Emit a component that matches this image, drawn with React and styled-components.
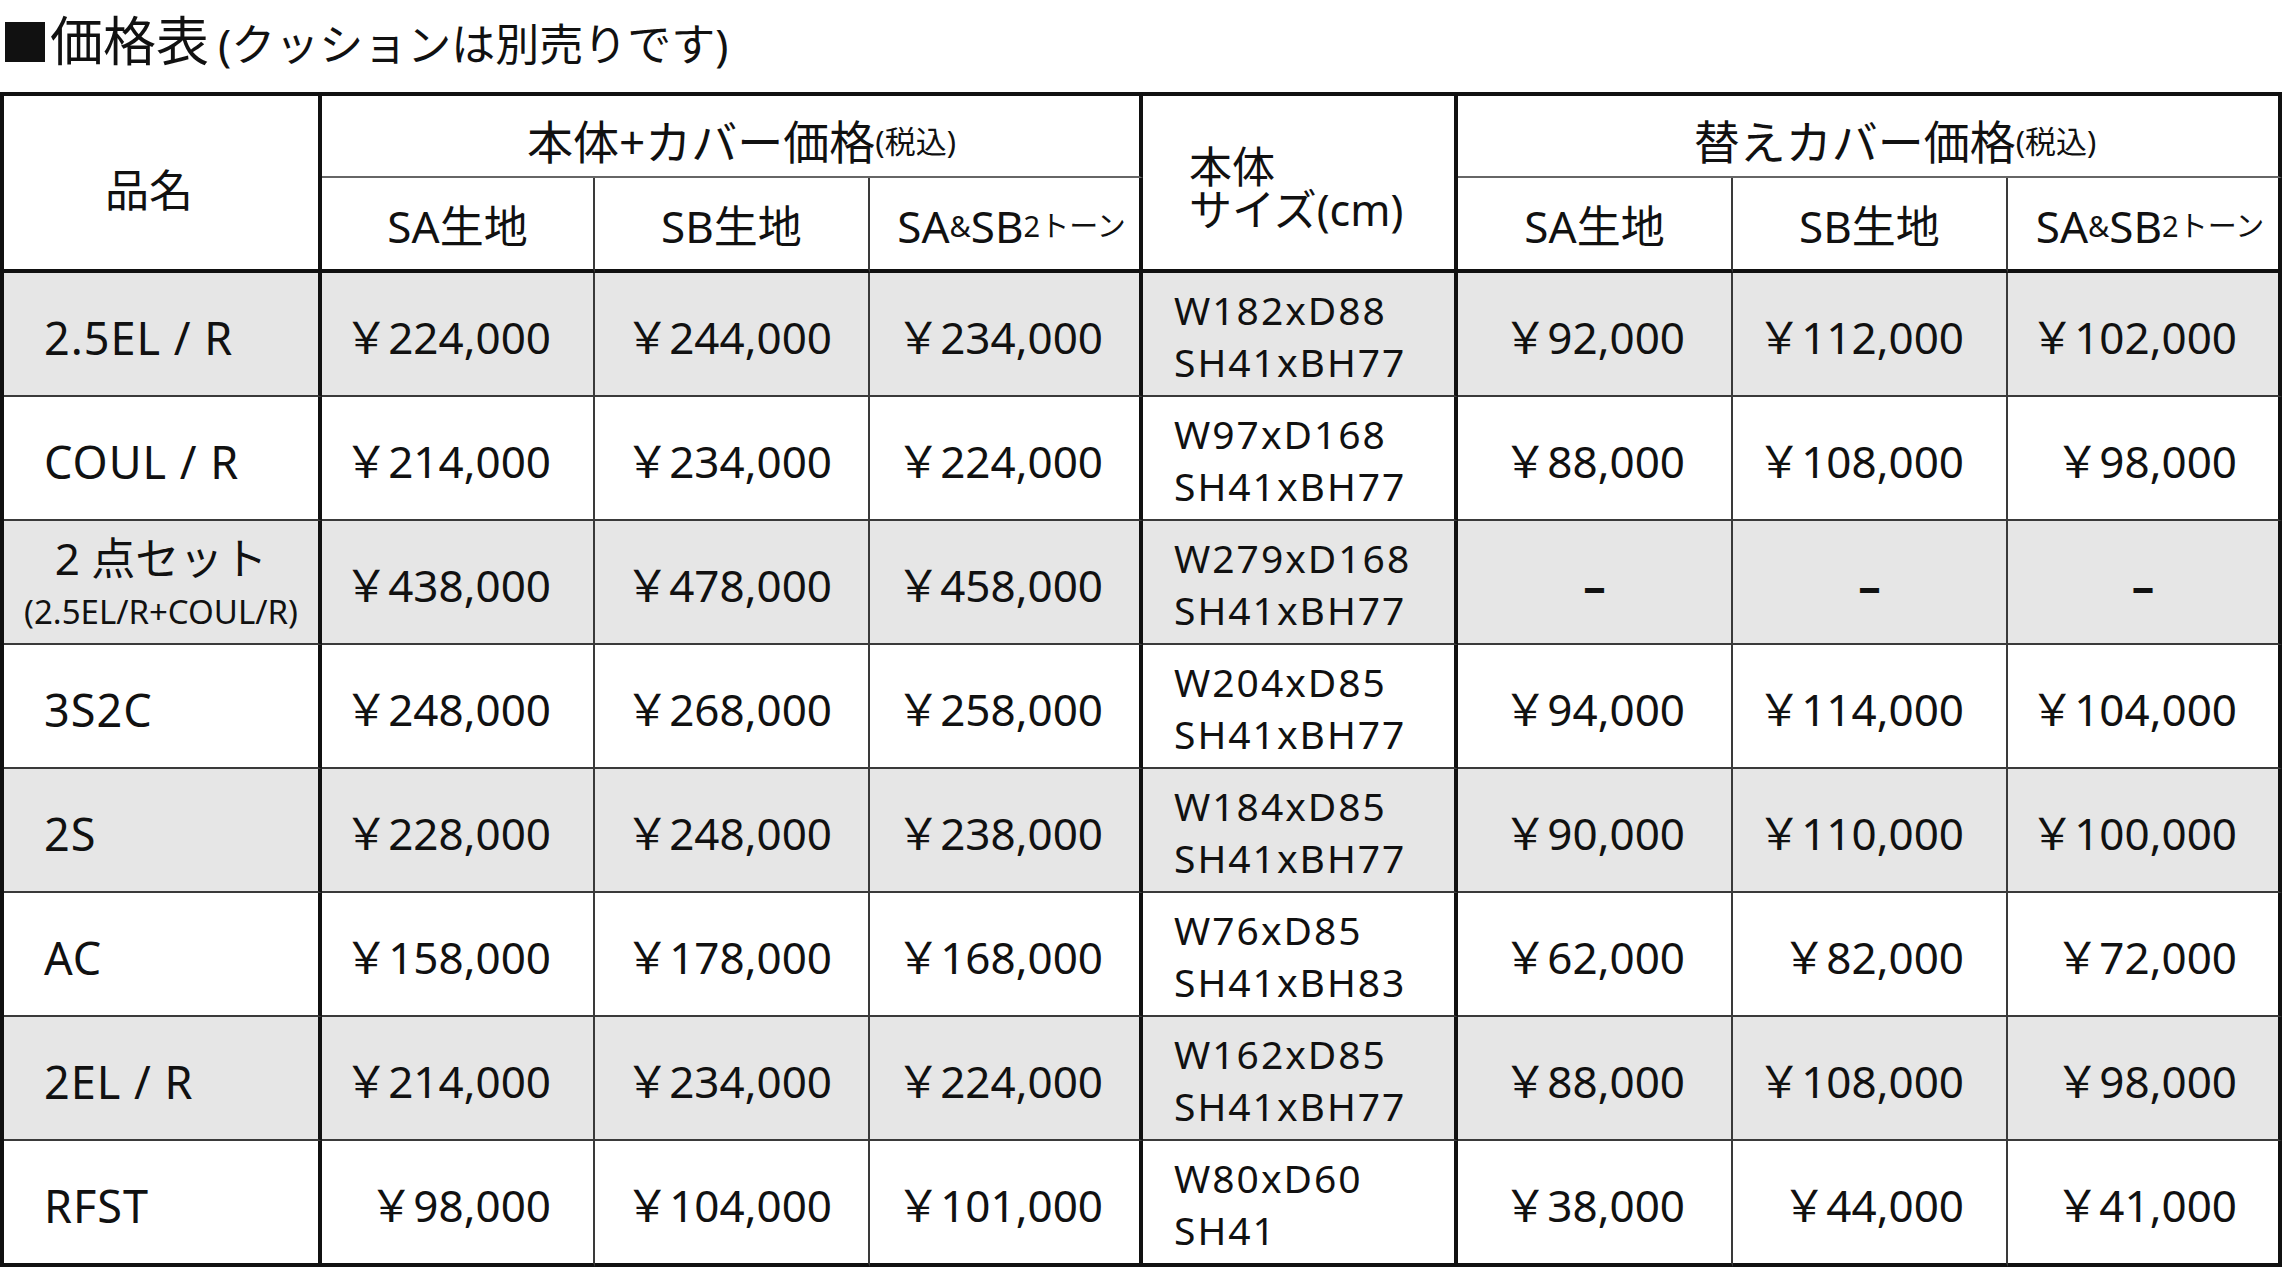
import React from "react";
import styled, { createGlobalStyle } from "styled-components";

const GlobalStyle = createGlobalStyle`
  html, body {
    margin: 0;
    padding: 0;
    background: #fff;
  }
  body {
    font-family: "Noto Sans", "Noto Sans CJK JP", sans-serif;
    color: #111;
  }
`;

const lineColor = { thick: "#111", thin: "#3a3a3a", sub: "#666" };
const lineWidth = { thick: 4, thin: 2, sub: 2 };

const Page = styled.div`
  width: 2284px;
`;

const Title = styled.h1`
  display: flex;
  align-items: baseline;
  box-sizing: border-box;
  height: 92px;
  margin: 0;
  padding-top: 14px;
  font-weight: 400;
  line-height: 1;
`;

const Square = styled.span`
  font-size: 50px;
`;

const TitleMain = styled.span`
  font-size: 53px;
`;

const TitleNote = styled.span`
  font-size: 44px;
  margin-left: 9px;
`;

const Table = styled.div`
  display: grid;
  grid-template-columns: 318px 273px 275px 273px 315px 275px 275px 274px;
  grid-template-rows: 82px 95px repeat(7, 124px) 126px;
  box-sizing: border-box;
  width: 2282px;
  border-top: 4px solid ${lineColor.thick};
  border-left: 4px solid ${lineColor.thick};
`;

const Cell = styled.div`
  box-sizing: border-box;
  display: flex;
  align-items: center;
  min-width: 0;
  border-right: ${(p) => lineWidth[p.$right]}px solid ${(p) => lineColor[p.$right]};
  border-bottom: ${(p) => lineWidth[p.$bottom]}px solid ${(p) => lineColor[p.$bottom]};
  background: ${(p) => (p.$gray ? "#e6e6e6" : "#fff")};
  white-space: nowrap;
`;

const HeadCell = styled(Cell)`
  justify-content: center;
  font-size: 44px;
  line-height: 1;
`;

const FabricHead = styled(HeadCell)`
  grid-row: 2;
  grid-column: ${(p) => p.$col};
  padding: 4px 0 0 ${(p) => p.$shift || 0}px;
`;

const NameHead = styled(HeadCell)`
  grid-row: 1 / span 2;
  grid-column: 1;
  padding: 14px 24px 0 0;
`;

const GroupHead = styled(HeadCell)`
  grid-row: 1;
  grid-column: ${(p) => p.$col} / span 3;
  padding: 10px 0 0 ${(p) => p.$shift}px;
  font-size: 46px;
`;

const Tax = styled.span`
  font-size: 31px;
`;

const SizeHead = styled(Cell)`
  grid-row: 1 / span 2;
  grid-column: 5;
  flex-direction: column;
  align-items: flex-start;
  justify-content: center;
  padding: 10px 0 0 46px;
  font-size: 43px;
  line-height: 43px;
`;

const Small = styled.span`
  font-size: 29px;
`;

const NameCell = styled(Cell)`
  padding: 6px 0 0 40px;
  font-size: 45px;
  letter-spacing: 1px;
  line-height: 1;
`;

const SetCell = styled(Cell)`
  flex-direction: column;
  justify-content: center;
  padding-top: 6px;
`;

const SetName = styled.div`
  font-size: 44px;
  line-height: 53px;
`;

const SetSub = styled.div`
  font-size: 33px;
  line-height: 53px;
`;

const PriceCell = styled(Cell)`
  justify-content: ${(p) => (p.$center ? "center" : "flex-end")};
  padding: 6px ${(p) => (p.$center ? 0 : p.$pad)}px 0 0;
  font-size: 44px;
  line-height: 1;
`;

const Dash = styled.span`
  font-weight: 700;
  font-size: 45px;
`;

const SizeCell = styled(Cell)`
  flex-direction: column;
  align-items: flex-start;
  justify-content: center;
  padding: 4px 0 0 31px;
  font-size: 39px;
  letter-spacing: 2px;
  line-height: 52px;
`;

const borders = ["thick", "thin", "thin", "thick", "thick", "thin", "thin", "thick"];
const pads = [0, 42, 36, 36, 0, 46, 42, 41];

const rows = [
  { name: "2.5EL / R", body: ["224,000", "244,000", "234,000"], size: ["W182xD88", "SH41xBH77"], cover: ["92,000", "112,000", "102,000"] },
  { name: "COUL / R", body: ["214,000", "234,000", "224,000"], size: ["W97xD168", "SH41xBH77"], cover: ["88,000", "108,000", "98,000"] },
  { name: "2 点セット", sub: "(2.5EL/R+COUL/R)", body: ["438,000", "478,000", "458,000"], size: ["W279xD168", "SH41xBH77"], cover: null },
  { name: "3S2C", body: ["248,000", "268,000", "258,000"], size: ["W204xD85", "SH41xBH77"], cover: ["94,000", "114,000", "104,000"] },
  { name: "2S", body: ["228,000", "248,000", "238,000"], size: ["W184xD85", "SH41xBH77"], cover: ["90,000", "110,000", "100,000"] },
  { name: "AC", body: ["158,000", "178,000", "168,000"], size: ["W76xD85", "SH41xBH83"], cover: ["62,000", "82,000", "72,000"] },
  { name: "2EL / R", body: ["214,000", "234,000", "224,000"], size: ["W162xD85", "SH41xBH77"], cover: ["88,000", "108,000", "98,000"] },
  { name: "RFST", body: ["98,000", "104,000", "101,000"], size: ["W80xD60", "SH41"], cover: ["38,000", "44,000", "41,000"] },
];

function FabricHeads({ offset }) {
  return (
    <>
      <FabricHead $col={offset + 1} $right={borders[offset]} $bottom="thick">SA生地</FabricHead>
      <FabricHead $col={offset + 2} $right={borders[offset + 1]} $bottom="thick">SB生地</FabricHead>
      <FabricHead $col={offset + 3} $right={borders[offset + 2]} $bottom="thick" $shift={14}>
        SA<Small>&amp;</Small>SB<Small>2トーン</Small>
      </FabricHead>
    </>
  );
}

function PriceRow({ row, last }) {
  const gray = row.index % 2 === 0;
  const bottom = last ? "thick" : "thin";
  const cover = row.cover || [null, null, null];
  return (
    <>
      {row.sub ? (
        <SetCell $right="thick" $bottom={bottom} $gray={gray}>
          <SetName>{row.name}</SetName>
          <SetSub>{row.sub}</SetSub>
        </SetCell>
      ) : (
        <NameCell $right="thick" $bottom={bottom} $gray={gray}>
          {row.name}
        </NameCell>
      )}
      {row.body.map((price, i) => (
        <PriceCell key={"b" + i} $right={borders[i + 1]} $bottom={bottom} $gray={gray} $pad={pads[i + 1]}>
          ￥{price}
        </PriceCell>
      ))}
      <SizeCell $right="thick" $bottom={bottom} $gray={gray}>
        {row.size.map((line) => (
          <div key={line}>{line}</div>
        ))}
      </SizeCell>
      {cover.map((price, i) => (
        <PriceCell key={"c" + i} $right={borders[i + 5]} $bottom={bottom} $gray={gray} $pad={pads[i + 5]} $center={!price}>
          {price ? `￥${price}` : <Dash>–</Dash>}
        </PriceCell>
      ))}
    </>
  );
}

export default function App() {
  return (
    <Page>
      <GlobalStyle />
      <Title>
        <Square>■</Square>
        <TitleMain>価格表</TitleMain>
        <TitleNote>(クッションは別売りです)</TitleNote>
      </Title>
      <Table>
        <NameHead $right="thick" $bottom="thick">品名</NameHead>
        <GroupHead $col={2} $right="thick" $bottom="sub" $shift={22}>
          本体+カバー価格<Tax>(税込)</Tax>
        </GroupHead>
        <SizeHead $right="thick" $bottom="thick">
          <div>本体</div>
          <div>サイズ(cm)</div>
        </SizeHead>
        <GroupHead $col={6} $right="thick" $bottom="sub" $shift={54}>
          替えカバー価格<Tax>(税込)</Tax>
        </GroupHead>
        <FabricHeads offset={1} />
        <FabricHeads offset={5} />
        {rows.map((row, index) => (
          <PriceRow key={row.name + index} row={{ ...row, index }} last={index === rows.length - 1} />
        ))}
      </Table>
    </Page>
  );
}
